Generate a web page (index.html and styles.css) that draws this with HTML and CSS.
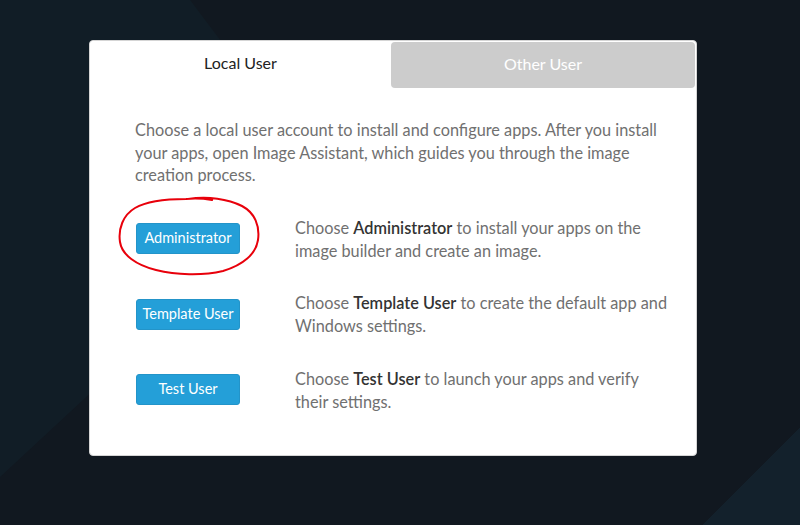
FILE: index.html
```html
<!DOCTYPE html>
<html lang="en">
<head>
    <meta charset="UTF-8">
    <meta name="viewport" content="width=device-width, initial-scale=1.0">
    <title>Choose a user</title>
    <link rel="stylesheet" href="styles.css">
</head>
<body>
    <div class="panel">
        <ul class="tabs">
            <li class="active">Local User</li>
            <li>Other User</li>
        </ul>
        <div class="content">
            <p class="intro">Choose a local user account to install and configure apps. After you install your apps, open Image Assistant, which guides you through the image creation process.</p>
            <div class="row">
                <span class="btn-wrap">
                    <button class="btn">Administrator</button>
                    <svg class="circle" width="146" height="82" viewBox="0 0 146 82">
                        <path d="M72 3 C92 0 112 3 126 10 C139 17 144 30 142 44 C140 58 127 69 107 75 C86 80 60 79 40 74 C20 69 6 59 4 46 C2 33 7 19 19 12 C31 5 49 3 70 3 C80 2 90 3 96 4" />
                    </svg>
                </span>
                <p class="desc">Choose <b>Administrator</b> to install your apps on the image builder and create an image.</p>
            </div>
            <div class="row">
                <span class="btn-wrap"><button class="btn">Template User</button></span>
                <p class="desc">Choose <b>Template User</b> to create the default app and Windows settings.</p>
            </div>
            <div class="row">
                <span class="btn-wrap"><button class="btn">Test User</button></span>
                <p class="desc">Choose <b>Test User</b> to launch your apps and verify their settings.</p>
            </div>
        </div>
    </div>
</body>
</html>
```

FILE: styles.css
```css
* {
    margin: 0;
    padding: 0;
    box-sizing: border-box;
}
ul,li{
    list-style: none;
}
body {
    background-color: #111820;
    background-image: linear-gradient(135deg, transparent 868px, #13212c 868px);
    font-family: Lato, "Open Sans", sans-serif;
    min-height: 525px;
    padding-top: 40px;
    padding-left: 89px;
}
/* lighter wedge on the left side of the backdrop */
body::before {
    content: "";
    position: fixed;
    left: 0;
    top: 0;
    width: 800px;
    height: 525px;
    background: #111d26;
    clip-path: polygon(0 0, 190px 0, 323px 177px, 0 477px);
    z-index: -1;
}
.panel {
    width: 608px;
    background: #fff;
    border-radius: 4px;
    border: 1px solid #d5d5d5;
}
.tabs {
    display: flex;
    height: 47px;
}
.tabs > li {
    flex: 1;
    display: flex;
    justify-content: center;
    align-items: center;
    padding-bottom: 4px;
    font-size: 16px;
    color: #fff;
    background: #cccccc;
    border-radius: 4px;
    margin: 1px 1px 0 0;
}
.tabs > li.active {
    color: #222;
    background: #fff;
    margin: 0;
    flex: 0 0 301px;
}
.content {
    padding: 31px 28px 42px 45px;
}
.intro {
    font-size: 16.3px;
    line-height: 22.5px;
    color: #707070;
    margin-bottom: 29px;
    max-width: 530px;
}
.row {
    display: flex;
    align-items: center;
    margin-bottom: 29.5px;
}
.row:last-child {
    margin-bottom: 0;
}
.btn-wrap {
    position: relative;
    flex: 0 0 104px;
    margin-left: 1px;
    margin-right: 55px;
}
.btn {
    width: 104px;
    height: 31px;
    padding-bottom: 2px;
    border: 1px solid #2394c9;
    border-radius: 3px;
    background: #249fd8;
    color: #fff;
    font-family: inherit;
    font-size: 14.5px;
}
.circle {
    position: absolute;
    left: -20px;
    top: -27px;
    pointer-events: none;
}
.circle path {
    fill: none;
    stroke: #e8000b;
    stroke-width: 2;
    stroke-linecap: round;
}
.desc {
    font-size: 16.3px;
    line-height: 23px;
    color: #707070;
}
.desc b {
    font-weight: 600;
    color: #333;
}
```
